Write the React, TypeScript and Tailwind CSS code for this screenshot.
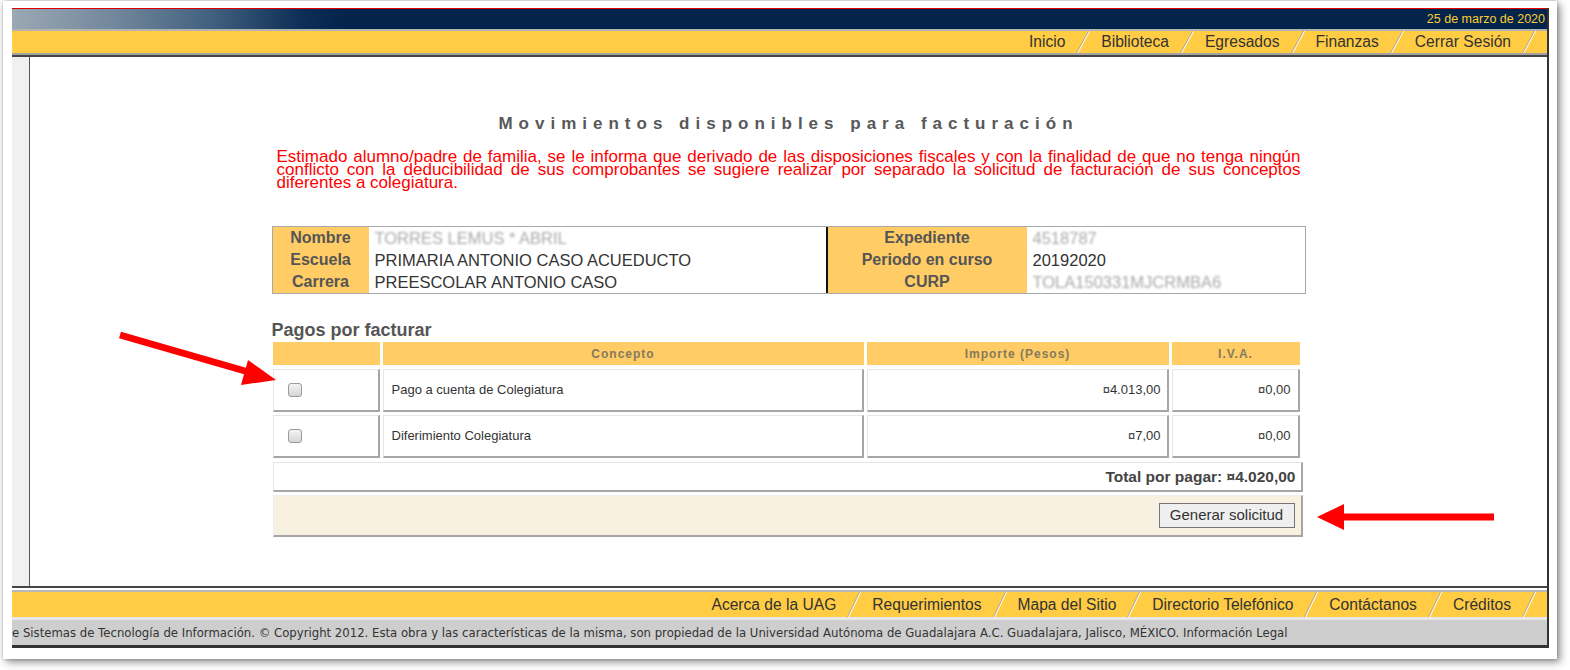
import React from 'react';

const navLinks = ['Inicio', 'Biblioteca', 'Egresados', 'Finanzas', 'Cerrar Sesión'];
const footerLinks = [
  'Acerca de la UAG',
  'Requerimientos',
  'Mapa del Sitio',
  'Directorio Telefónico',
  'Contáctanos',
  'Créditos',
];

const alumno = [
  { label: 'Nombre', value: 'TORRES LEMUS * ABRIL', hidden: true },
  { label: 'Escuela', value: 'PRIMARIA ANTONIO CASO ACUEDUCTO' },
  { label: 'Carrera', value: 'PREESCOLAR ANTONIO CASO' },
];

const registro = [
  { label: 'Expediente', value: '4518787', hidden: true },
  { label: 'Periodo en curso', value: '20192020' },
  { label: 'CURP', value: 'TOLA150331MJCRMBA6', hidden: true },
];

const pagos = [
  { id: 1, concepto: 'Pago a cuenta de Colegiatura', importe: '¤4.013,00', iva: '¤0,00' },
  { id: 2, concepto: 'Diferimiento Colegiatura', importe: '¤7,00', iva: '¤0,00' },
];

// diagonal divider between menu links
const Slash = ({ h }: { h: number }) => (
  <svg width="16" height={h} viewBox={`0 0 16 ${h}`} className="shrink-0">
    <line x1="1.5" y1={h} x2="13.5" y2="0" stroke="#a8a8a8" strokeWidth="1" />
    <line x1="2.7" y1={h} x2="14.7" y2="0" stroke="#ffffff" strokeWidth="1" />
  </svg>
);

const Checkbox = () => (
  <div className="w-[14px] h-[14px] rounded-[3px] border border-[#9a9a9a] bg-[linear-gradient(#f4f4f4,#d6d6d6)]" />
);

const cell =
  'bg-white border-t border-l border-t-[#e6e6e6] border-l-[#e6e6e6] border-r-2 border-b-2 border-r-[#a6a6a6] border-b-[#a6a6a6]';

const InfoColumn = ({
  rows,
  labelWidth,
}: {
  rows: { label: string; value: string; hidden?: boolean }[];
  labelWidth: string;
}) => (
  <div className="flex flex-1">
    <div className={`${labelWidth} bg-[#ffcc66]`}>
      {rows.map((r) => (
        <div key={r.label} className="h-[22px] leading-[22px] text-center font-bold text-[16px] text-[#555]">
          {r.label}
        </div>
      ))}
    </div>
    <div className="flex-1 pl-[6px]">
      {rows.map((r) => (
        <div
          key={r.label}
          className={
            r.hidden
              ? 'h-[22px] leading-[22px] text-[16.5px] text-[#a9a9a9] blur-[1.2px]'
              : 'h-[22px] leading-[22px] text-[16.5px] text-[#333]'
          }
        >
          {r.value}
        </div>
      ))}
    </div>
  </div>
);

export default function App() {
  return (
    <div className="relative w-[1570px] h-[670px] bg-white overflow-hidden font-['Liberation_Sans',Arial,sans-serif]">
      <div className="ml-[3px] mt-[1px] w-[1554px] h-[658px] bg-white pl-[9px] pt-[7px] shadow-[0_0_3px_rgba(0,0,0,0.25),3px_3px_8px_rgba(0,0,0,0.45)]">
        <div className="w-[1537px] border-r-2 border-[#333]">
          {/* top bar */}
          <div className="h-[1px] bg-[#e00000]" />
          <div className="h-[20px] flex items-center justify-end pr-[2px] bg-[linear-gradient(to_right,#9ca8b4_0px,#73889c_100px,#41607e_200px,#0d2e56_290px,#03254c_330px,#03254c_100%)]">
            <span className="text-[12.5px] text-[#ffcc33]">25 de marzo de 2020</span>
          </div>
          <div className="h-[2px] bg-[#b3b3b3]" />
          <div className="h-[22px] bg-[#ffcc44] flex items-center justify-end pr-[10px] text-[15.6px] text-[#333]">
            {navLinks.map((l) => (
              <React.Fragment key={l}>
                <span className="px-[10px]">{l}</span>
                <Slash h={22} />
              </React.Fragment>
            ))}
          </div>
          <div className="h-[2px] bg-[#a3a3a3]" />
          <div className="h-[2px] bg-[#444]" />

          {/* page body */}
          <div className="flex h-[529px]">
            <div className="w-[18px] bg-[#f0f0f0] border-r border-[#555]" />
            <div className="flex-1 bg-white">
              <div className="w-[1034px] mx-auto pt-[57px]">
                <h2 className="text-center font-bold text-[17px] leading-[20px] tracking-[6px] text-[#585858]">
                  Movimientos disponibles para facturación
                </h2>
                <p className="mt-[16px] px-[5px] text-justify text-[17px] leading-[13px] text-[#ff0000]">
                  Estimado alumno/padre de familia, se le informa que derivado de las disposiciones fiscales y
                  con la finalidad de que no tenga ningún conflicto con la deducibilidad de sus comprobantes se
                  sugiere realizar por separado la solicitud de facturación de sus conceptos diferentes a
                  colegiatura.
                </p>

                <div className="mt-[37px] flex border border-[#a8a8a8]">
                  <InfoColumn rows={alumno} labelWidth="w-[96px]" />
                  <div className="w-[1.5px] bg-[#111]" />
                  <div className="w-[477px] flex">
                    <InfoColumn rows={registro} labelWidth="w-[199px]" />
                  </div>
                </div>

                <h3 className="mt-[25px] font-bold text-[18px] leading-[22px] text-[#555]">Pagos por facturar</h3>

                <div className="ml-[1px] mt-[1px]">
                  <div className="grid grid-cols-[107px_481px_302px_128px] gap-x-[3px] h-[23px] text-[12px] font-bold tracking-[1px] text-[#857a5c]">
                    <div className="bg-[#ffcc66]" />
                    <div className="bg-[#ffcc66] flex items-center justify-center">Concepto</div>
                    <div className="bg-[#ffcc66] flex items-center justify-center">Importe (Pesos)</div>
                    <div className="bg-[#ffcc66] flex items-center justify-center">I.V.A.</div>
                  </div>

                  <div className="mt-[4px] flex flex-col gap-[3px]">
                    {pagos.map((p) => (
                      <div
                        key={p.id}
                        className="grid grid-cols-[107px_481px_302px_128px] gap-x-[3px] h-[43px] text-[13px] text-[#333]"
                      >
                        <div className={`${cell} flex items-center pl-[14px]`}>
                          <Checkbox />
                        </div>
                        <div className={`${cell} flex items-center pl-[8px]`}>{p.concepto}</div>
                        <div className={`${cell} flex items-center justify-end pr-[6px]`}>{p.importe}</div>
                        <div className={`${cell} flex items-center justify-end pr-[7px]`}>{p.iva}</div>
                      </div>
                    ))}
                  </div>

                  <div className={`${cell} mt-[4px] w-[1030px] h-[30px] flex items-center justify-end pr-[5px] font-bold text-[15.5px] text-[#444]`}>
                    Total por pagar: ¤4.020,00
                  </div>
                  <div className="mt-[3px] w-[1030px] h-[42px] flex items-center justify-end pr-[6px] bg-[#f8f0e1] border-t border-l border-t-[#eee] border-l-[#eee] border-r-2 border-b-2 border-r-[#a6a6a6] border-b-[#a6a6a6]">
                    <button className="w-[136px] h-[25px] bg-[#efefef] border-[1.5px] border-[#767676] text-[15px] text-[#333]">
                      Generar solicitud
                    </button>
                  </div>
                </div>
              </div>
            </div>
          </div>

          {/* footer */}
          <div className="h-[2px] bg-[#444]" />
          <div className="h-[2px] bg-white" />
          <div className="h-[2px] bg-[#b8b8b8]" />
          <div className="h-[25px] bg-[#ffcc44] flex items-center justify-end pr-[10px] text-[15.6px] text-[#333]">
            {footerLinks.map((l) => (
              <React.Fragment key={l}>
                <span className="px-[10px]">{l}</span>
                <Slash h={25} />
              </React.Fragment>
            ))}
          </div>
          <div className="h-[3px] bg-[#e8e8e8]" />
          <div className="h-[25px] pt-[3px] bg-[#cecece] flex items-center overflow-hidden whitespace-nowrap font-['DejaVu_Sans',Verdana,sans-serif] text-[11.7px] text-[#333]">
            e Sistemas de Tecnología de Información. © Copyright 2012. Esta obra y las características de la misma,
            son propiedad de la Universidad Autónoma de Guadalajara A.C. Guadalajara, Jalisco, MÉXICO. Información
            Legal
          </div>
          <div className="h-[3px] bg-[#333]" />
        </div>
      </div>

      {/* red pointer arrows */}
      <svg className="absolute left-0 top-0 pointer-events-none" width="1570" height="670">
        <line x1="120" y1="335" x2="252" y2="373" stroke="#ff0000" strokeWidth="7" />
        <polygon points="276,380 248,360 241,385" fill="#ff0000" />
        <line x1="1494" y1="517" x2="1340" y2="517" stroke="#ff0000" strokeWidth="7" />
        <polygon points="1317,517 1344,504 1344,530" fill="#ff0000" />
      </svg>
    </div>
  );
}
